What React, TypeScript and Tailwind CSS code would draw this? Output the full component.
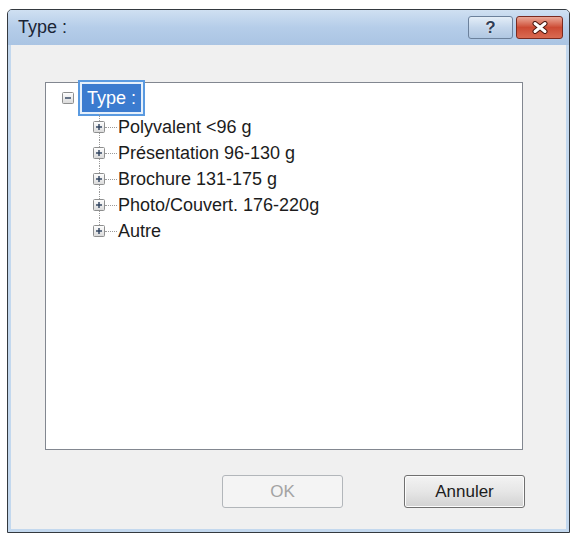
import React from 'react';

const items = [
  'Polyvalent <96 g',
  'Présentation 96-130 g',
  'Brochure 131-175 g',
  'Photo/Couvert. 176-220g',
  'Autre',
];

function ExpandBox({ open }: { open?: boolean }) {
  return (
    <svg width="12" height="12" viewBox="0 0 12 12" className="shrink-0">
      <defs>
        <linearGradient id={open ? 'gm' : 'gp'} x1="0" y1="0" x2="0" y2="1">
          <stop offset="0" stopColor="#ffffff" />
          <stop offset="1" stopColor="#d9d9d9" />
        </linearGradient>
      </defs>
      <rect x="0.5" y="0.5" width="11" height="11" rx="1" fill={`url(#${open ? 'gm' : 'gp'})`} stroke="#8e8f8f" />
      <path d="M3 6h6" stroke="#2c3f5c" strokeWidth="1.4" />
      {!open && <path d="M6 3v6" stroke="#2c3f5c" strokeWidth="1.4" />}
    </svg>
  );
}

function TreeRow({ label, last }: { label: string; last: boolean }) {
  return (
    <div className="flex items-center h-[26px]">
      <div className="flex flex-col items-center w-[12px] h-full">
        <div className="flex-1 border-l border-dotted border-[#9a9a9a]" />
        <ExpandBox />
        <div className={`flex-1 border-l border-dotted ${last ? 'border-transparent' : 'border-[#9a9a9a]'}`} />
      </div>
      <div className="w-[12px] border-t border-dotted border-[#9a9a9a]" />
      <span className="ml-[1px] text-[18px] text-[#1c1c1c] leading-none whitespace-nowrap">{label}</span>
    </div>
  );
}

export default function App() {
  return (
    <div className="w-[576px] h-[540px] bg-white pl-[7px] pt-[9px] font-['Liberation_Sans',Arial,sans-serif]">
      <div className="w-[563px] h-[524px] border border-[#34393f] rounded-t-[5px] bg-[#c3d8ee] flex flex-col">
        {/* title bar */}
        <div className="h-[35px] shrink-0 flex items-center rounded-t-[4px] bg-gradient-to-b from-[#cfe0f2] via-[#b5cde9] to-[#aac4e3]">
          <span className="ml-[10px] text-[18px] text-[#1b2536]">Type :</span>
          <div className="ml-auto mr-[6px] flex items-center gap-[3px]">
            <div className="w-[45px] h-[23px] rounded-[3px] border border-[#6c819c] bg-gradient-to-b from-[#e4eef8] via-[#c4d6eb] to-[#b0c7e2] flex items-center justify-center">
              <span className="text-[17px] font-bold leading-none text-[#2f3e56] [text-shadow:0_0_2px_#ffffff]">?</span>
            </div>
            <div className="w-[47px] h-[23px] rounded-[3px] border border-[#7a2a20] bg-gradient-to-b from-[#eaa898] via-[#cc4a33] to-[#d96a52] flex items-center justify-center">
              <svg width="18" height="13" viewBox="0 0 18 13">
                <path d="M4 2.5l10 8M14 2.5l-10 8" stroke="#4a1810" strokeWidth="5" strokeLinecap="round" />
                <path d="M4 2.5l10 8M14 2.5l-10 8" stroke="#ffffff" strokeWidth="3" strokeLinecap="round" />
              </svg>
            </div>
          </div>
        </div>

        {/* content */}
        <div className="mx-[3px] mb-[3px] flex-1 bg-[#f0f0f0] flex flex-col">
          <div className="ml-[34px] mt-[37px] w-[478px] h-[368px] shrink-0 border border-[#828790] bg-white pl-[16px]">
            <div className="flex items-center -mt-[3px]">
              <ExpandBox open />
              <div className="ml-[4px] border-2 border-[#5a9ae0] p-[2px] bg-[#e6f0fb]">
                <div className="h-[28px] px-[5px] bg-[#3b7bcf] flex items-center">
                  <span className="text-[18px] text-white leading-none whitespace-nowrap">Type :</span>
                </div>
              </div>
            </div>
            <div className="ml-[31px] -mt-[2px]">
              {items.map((label, i) => (
                <TreeRow key={label} label={label} last={i === items.length - 1} />
              ))}
            </div>
          </div>

          <div className="mt-[25px] pr-[41px] flex justify-end gap-[61px]">
            <div className="w-[121px] h-[33px] rounded-[3px] border border-[#b2b6ba] bg-[#f4f4f4] flex items-center justify-center">
              <span className="text-[17px] text-[#a3a3a3]">OK</span>
            </div>
            <div className="w-[121px] h-[33px] rounded-[3px] border border-[#707070] bg-gradient-to-b from-[#f3f3f3] via-[#e6e6e6] to-[#d2d2d2] shadow-[inset_0_0_0_1px_#fcfcfc] flex items-center justify-center">
              <span className="text-[17px] text-[#1c1c1c]">Annuler</span>
            </div>
          </div>
        </div>
      </div>
    </div>
  );
}
